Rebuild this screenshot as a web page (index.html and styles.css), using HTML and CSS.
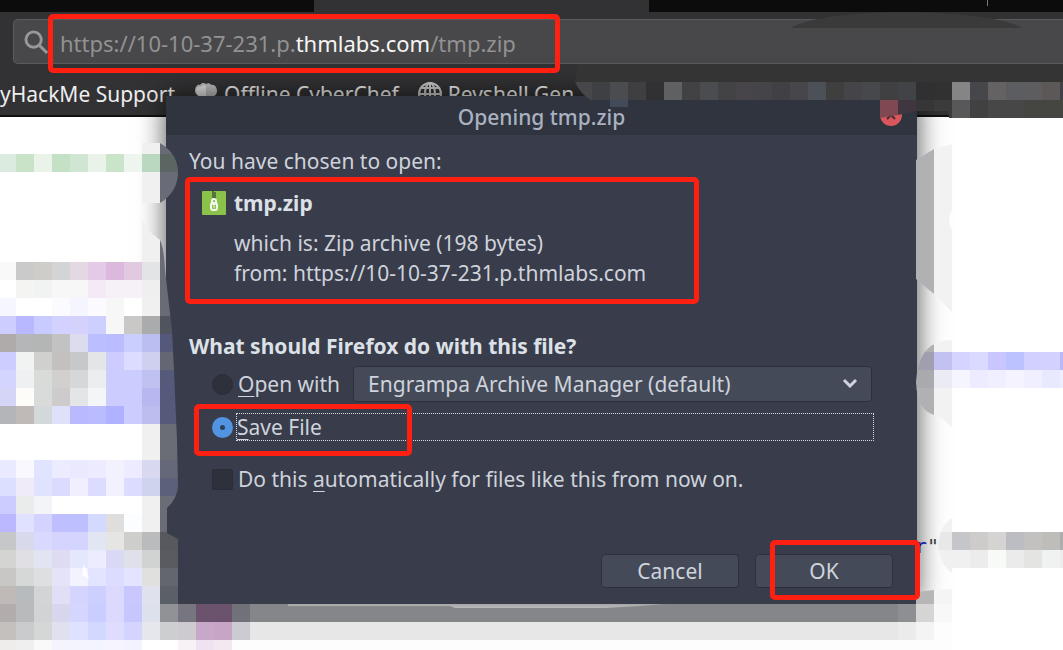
FILE: index.html
```html
<!DOCTYPE html>
<html lang="en">
<head>
<meta charset="utf-8">
<title>Opening tmp.zip</title>
<link rel="stylesheet" href="styles.css">
</head>
<body>
<header class="browser">
  <div class="tabs"><div class="tab-active"></div><i class="tab-divider"></i></div>
  <div class="toolbar">
    <div class="address">
      <svg class="search-icon" viewBox="0 0 26 26" aria-hidden="true"><circle cx="10" cy="10" r="8"/><path d="M16 16l8 8"/></svg>
      <span class="url">https://10-10-37-231.p.<b>thmlabs.com</b>/tmp.zip</span>
      <span class="mark mark-url"></span>
    </div>
  </div>
  <nav class="bookmarks">
    <a href="#">yHackMe Support</a>
    <a href="#"><svg viewBox="0 0 24 24" width="24" height="24" aria-hidden="true"><path fill="#bdbdbd" d="M1 9c0-5 3-7 5-6 2-3 5-2 6-1 3-2 5 0 5 1 4-1 6 3 6 6 0 4-3 5-5 6v6H7v-6c-3-1-6-3-6-6z"/><path fill="#e2e2e2" d="M2 9c0-4 3-5 5-4 1-2 4-2 5-1v11H7c-3-1-5-3-5-6z"/></svg>Offline CyberChef</a>
    <a href="#"><svg viewBox="0 0 24 24" width="24" height="24" fill="none" stroke="#c8c8c8" stroke-width="2" aria-hidden="true"><circle cx="12" cy="12" r="11"/><ellipse cx="12" cy="12" rx="5" ry="11"/><path d="M12 1v22M1 12h22M3 6h18M3 18h18"/></svg>Revshell Gen</a>
  </nav>
</header>
<main class="page"><code class="source"><span>r</span>"</code></main>

<section class="dialog" role="dialog" aria-labelledby="title">
  <div class="titlebar">
    <h1 id="title">Opening tmp.zip</h1>
    <button class="close" type="button" aria-label="Close"><svg viewBox="0 0 22 22" width="22" height="22"><circle cx="11" cy="11" r="11" fill="#d9575c"/><path d="M7 7l8 8M15 7l-8 8" stroke="#3b3038" stroke-width="2"/></svg></button>
  </div>
  <form class="content">
    <p>You have chosen to open:</p>
    <div class="file">
      <div class="file-name">
        <svg viewBox="0 0 24 24" width="24" height="24" aria-hidden="true"><rect width="24" height="24" rx="1" fill="#8bc34a"/><path d="M11 0v2h2v2h-2v2h2v2" fill="none" stroke="#54753a" stroke-width="2"/><rect x="10" y="8" width="4" height="5" rx="2" fill="none" stroke="#f5f8ee" stroke-width="2"/><rect x="9" y="12" width="6" height="7" rx="2" fill="none" stroke="#f5f8ee" stroke-width="2"/><path d="M12 12v5" stroke="#f5f8ee" stroke-width="1"/></svg>
        <strong>tmp.zip</strong>
      </div>
      <div class="file-info"><div>which is: Zip archive (198 bytes)</div><div>from: https://10-10-37-231.p.thmlabs.com</div></div>
      <span class="mark mark-file"></span>
    </div>
    <h2>What should Firefox do with this file?</h2>
    <div class="option open-option">
      <input type="radio" name="action" id="open"><label for="open"><u>O</u>pen with</label>
      <div class="select-wrap">
        <select aria-label="Application"><option>Engrampa Archive Manager (default)</option></select>
        <svg class="chevron" viewBox="0 0 16 10" aria-hidden="true"><path d="M2 2l6 6 6-6"/></svg>
      </div>
    </div>
    <div class="option save-option">
      <input type="radio" name="action" id="save" checked><label for="save"><u>S</u>ave File</label>
      <span class="mark mark-save"></span>
    </div>
    <div class="option auto-option">
      <input type="checkbox" id="auto"><label for="auto">Do this <u>a</u>utomatically for files like this from now on.</label>
    </div>
    <div class="actions">
      <button type="button">Cancel</button>
      <div class="ok"><button type="button">OK</button><span class="mark mark-ok"></span></div>
    </div>
  </form>
</section>

<svg class="mosaic" viewBox="0 0 1063 650" aria-hidden="true">
  <defs>
    <clipPath id="edges"><path d="M0 154H142V143H160Q178 154 178 172Q178 192 160 203H142V172H0zM0 262H142V220L150 232L160 240Q164 248 165 270L172 330L174 370L177 440L178 485Q178 498 167 508V533L178 539V604H288V606H450L455 608H605L640 606L665 604H916V592L934 590L952 589V650H0zM577 64H1063V118H949L948 111H916L898 115L880 118V100H628V107H613Q585 104 575 82zM916 160L934 149L952 144V210Q946 220 952 230V312L934 294L916 279zM952 340Q918 340 916 382Q917 410 934 415Q944 418 952 428V388H1063V352H952zM952 518Q940 524 938 546Q940 565 952 573V568H1063V532H952z"/></clipPath>
  </defs>
  <path fill="#3a3a3b" d="M791 28C825 6 990 8 1022 28z"/>
  <g id="cells" clip-path="url(#edges)"></g>
  <path fill="#fff" d="M84 564l5 15-7-4z"/>
</svg>
<script src="mosaic.js"></script>
</body>
</html>
```
FILE: styles.css
```css
* { box-sizing: border-box; }
body { margin: 0; min-height: 100vh; position: relative; overflow: hidden; background: #fff; font: 21px/30px "Noto Sans", sans-serif; color: #ced3dc; }
h1, h2, p { margin: 0; font-size: inherit; }
.browser { background: #323234; border-bottom: 2px solid #111; height: 117px; }
.tabs { height: 12px; background: #0c0c0c; display: flex; }
.tab-active { margin-left: 314px; width: 335px; background: #323234; }
.tab-divider { margin-left: 338px; width: 1px; height: 6px; background: #777; }
.toolbar { padding: 7px 0 0 13px; }
.address { position: relative; height: 45px; display: flex; align-items: center; gap: 11px; padding: 2px 0 0 10px; background: #48484a; border: 1px solid #5b5b5d; border-width: 1px 0 1px 1px; border-radius: 5px 0 0 5px; }
.search-icon { width: 25px; height: 25px; fill: none; stroke: #98989a; stroke-width: 3; }
.url { color: #929292; font-size: 22px; white-space: nowrap; }
.url b { color: #f5f5f5; font-weight: 400; }
.bookmarks { display: flex; gap: 19px; padding-top: 15px; white-space: nowrap; }
.bookmarks a { display: flex; align-items: center; gap: 6px; color: #eee; text-decoration: none; }
.page { padding: 413px 124px 0 0; text-align: right; }
.source { font: 20px/30px "DejaVu Sans Mono", monospace; color: #444; }
.source span { color: #22c; }
.dialog { position: absolute; top: 96px; left: 166px; right: 146px; background: #393c4a; box-shadow: 0 0 26px rgba(0, 0, 0, .7); }
.titlebar { position: relative; height: 39px; background: #2f343f; text-align: center; }
.titlebar h1 { font-weight: 500; line-height: 42px; color: #aab2c1; }
.close { position: absolute; top: 8px; right: 15px; padding: 0; border: 0; background: none; line-height: 0; }
.content { padding: 11px 24px 16px 23px; }
.file { position: relative; padding: 12px 0 0 13px; }
.file-name { display: flex; align-items: center; gap: 8px; color: #dce1e8; }
.file-info { padding: 10px 0 0 32px; }
h2 { margin-top: 43px; font-weight: 700; color: #dce1e8; }
.option { position: relative; display: flex; align-items: center; margin-left: 23px; gap: 5px; white-space: nowrap; }
.option u { text-underline-offset: 4px; text-decoration-thickness: 1px; }
.option input { appearance: none; flex: none; width: 21px; height: 21px; margin: 0; background: #2e313c; border: 1px solid #2a2d38; border-radius: 2px; }
.option input[type="radio"] { border-radius: 50%; }
.option input:checked { border: 8px solid #5294e2; background: #2b3f5c; }
.open-option { height: 36px; margin-top: 5px; margin-right: 21px; }
.select-wrap { position: relative; flex: 1; margin-left: 8px; }
select { appearance: none; display: block; width: 100%; height: 36px; padding: 0 40px 0 14px; font: inherit; color: inherit; background: #444a58; border: 1px solid #2d303c; border-radius: 4px; }
.chevron { position: absolute; right: 14px; top: 12px; width: 16px; height: 10px; fill: none; stroke: #ced3dc; stroke-width: 3; }
.save-option { height: 28px; margin-top: 11px; margin-right: 19px; gap: 3px; }
.save-option label { flex: 1; height: 28px; line-height: 26px; border: 1px dotted #d7dae0; }
.auto-option { margin-top: 23px; }
.actions { display: flex; justify-content: flex-end; gap: 16px; margin-top: 60px; }
.actions button { width: 138px; height: 34px; padding: 0; font: inherit; color: inherit; background: #444a58; border: 1px solid #2d303c; border-radius: 4px; }
.ok { position: relative; height: 34px; }
.mark { position: absolute; border: 5px solid #ff2012; border-radius: 5px; pointer-events: none; z-index: 3; }
.mark-url { left: 34px; top: -6px; width: 512px; height: 59px; }
.mark-file { left: -4px; top: 1px; width: 514px; height: 127px; }
.mark-save { left: -18px; top: -9px; width: 218px; height: 52px; }
.mark-ok { left: 15px; top: -14px; width: 150px; height: 60px; }
.mosaic { position: absolute; left: 0; top: 0; width: 1063px; height: 650px; pointer-events: none; }
```
FILE: mosaic.js
```js
// Each row: top, left, then one colour per 18px cell.
const rows = [
  "64 574 " + "343434 ".repeat(28),
  "82 574 47474b 3f4043 4b4c4f 3f3f42 313133 5f6064 424245 4b4c4f 434346 474549 454549 414145 47474b 4b5156 3f3f40 454549 47484c 404042 414347 303032 313132 858586 45474a 656263 5c5d60 5d5d60 5c5858 404146",
  "100 574 2f343f 2f343f 434b5a",
  "100 880 804850 40363f 363638 3b3b3c 58585a 414142 474747 474747 454542 454542 454542",
  "136 142 f0f0f0 696c76",
  "154 -2 dcebe0 c9e3c9 e9f3e9 c4e0c5 d0e6d2 e9f3e9 c9e4c9 eef5ee bad7c0 5b6562",
  "172 142 f0f0f0 696c76",
  "190 142 f0f0f0 696c76",
  "208 142 f0f0f0 696c76",
  "226 142 f0f0f0 696c76",
  "244 142 f0f0f0 696c76",
  "262 -2 f9f9f9 c9cac9 cfcdca d2d5d4 e4d8e2 e3cbe7 dcb9dc e1cae0 e2e4e6 696c76",
  "280 -2 ffffff f4f5f3 f0f3f2 f7f7f7 f6f7f6 f4e9f4 f6f1f7 f5f1f7 efefef 696c76",
  "298 -2 f5f6ff ffffff ffffff fafaff f5f5ff fafaff f7f7f7 ffffff f0f0f0 696c76",
  "316 -2 cdcdff b7b8ff c8cbff d2d1ff d5d1fd cdd0ff f7f7f7 c9c8c7 a9abad 50545e",
  "334 -2 afabaa b4b6b7 b4b6b6 c2c2c2 dddcef bcbfff babcff cccdff bbbef1 54587a",
  "352 -2 cdcdff f1f2f2 d0d1ce c5c0c0 c6c8ca e4e5e6 ccccff dbdcff cfd0ef 646772",
  "370 -2 d4d5ff eef0f2 d9dbd9 d2d0ce d5d7d9 ecedef ccccff cccdff bfc1f1 55597a",
  "388 -2 d5d6f7 fefcf8 d9dbda cecbcc e3e5e7 f3f5f8 ccccff cccdff b7b8f0 55597a",
  "406 -2 b3b5b8 bfbab7 d3d8db dfe1fa b9b9ff bbbcff b1b2ff cccdff bdbef0 55597a",
  "424 -2 " + "ffffff ".repeat(8) + "f0f0f0 6a6d76",
  "442 -2 " + "ffffff ".repeat(8) + "f0f0f0 6a6d76",
  "460 -2 e9e9ff f9f8ff e1e4ff ecebff e9e9ff edebff f2f2ff ecebff d8d9f0 656879",
  "478 -2 dcdfff f0ebf8 e0e3ff dbdaff f0eeff dbdcff f2f2ff dbdcff d0d3ee 5c6078",
  "496 -2 cbccff eaebeb f2f4f7 ffffff ffffff ffffff ffffff ffffff f0f0f0 6a6d76",
  "514 -2 bbb8ff e0e1ff d4d2ff bfbeff bdbfff d4daff dfdedd fbfdff f0f0f0 6a6d76",
  "532 -2 c5c7c9 d8d9eb d9d8ff d4d4ff d3d4ff e2e5f2 e5e5e3 cecfcd b9bbbd 58595e",
  "550 -2 d4d5d2 e0dfe3 e1e4f2 dfdbf2 e5e7ff edecff d9d9f6 e0e0eb d0d3d1 5a5b60",
  "568 -2 c8c7c5 d5d8d7 dddfe0 e4e3f7 f3f2ff e3e4ff dbdcff e3e4ff e0e0df 63666e",
  "586 -2 bfbab7 b8bbbd d2d4d5 e1dff5 d5d4ff cdcfff ddd9fe c8c8ff dfe2ec 5b5f68",
  "604 -2 b2adac b8babc d1d3d4 d8d6ed d5d6ff cacdff dcd9fe c6c7ff dde1ec 909295 77757f 6c536d 6c536d 707179 " + "858689 ".repeat(36) + "8e8f93 d5d5d5 f8f8f8",
  "622 -2 c4c0bd c9cbcd d5d7d7 e0e0f0 dee2ff d3d8ff dfdcff d3d4ff e5e7ec cdcecf cfc9d0 c7a8cb c7a5c7 cccbd1 " + "e7e7e7 ".repeat(36) + "ebebeb f4f4f4 fdfdfd",
  "640 -2 eeedec eeefee f9f9fa f5f4fd f4f4ff f2f4ff f5f4ff f3f3ff ffffff ffffff f6f2f5 f0e3f1 f3e8f1 fdfdfd " + "fdfdfd ".repeat(39),
  "586 916 b6b6b6 f4f4f4",
  "136 916 b0b1b3 f2f2f2",
  "154 916 b0b1b3 f2f2f2",
  "172 916 b0b1b3 f2f2f2",
  "190 916 b0b1b3 f2f2f2",
  "208 916 b0b1b3 f2f2f2",
  "226 916 b0b1b3 f2f2f2",
  "244 916 b0b1b3 f2f2f2",
  "262 916 b0b1b3 f2f2f2",
  "280 916 b0b1b3 f2f2f2",
  "298 916 b0b1b3 f2f2f2",
  "334 916 b0b1b3 f2f2f2",
  "352 916 a09fb0 c3c1f2 d3d4ff dad9ff c9c5ff bcc2ff d1d0ff d3d2ff b9b8ff",
  "370 916 a9a9ae ebebf3 f5f5ff ecebff f0efff f4f3ff f0efff e8e8ff edeeff",
  "388 916 b0b1b3 f2f2f2",
  "406 916 b0b1b3 f2f2f2",
  "424 916 b0b1b3 f2f2f2",
  "514 934 f2f2f2",
  "532 934 e8e8e8 c5c6c9 cdcccb d6d4d2 bcbdc2 c3c1bf bfbdba adadae",
  "550 934 f0f0f0 f0f0f0 ececec f8faf8 ebebeb e4e4e2 eff2f0 ededed",
  "568 934 f2f2f2"
];

const cells = document.getElementById("cells");
for (const row of rows) {
  const [top, left, ...colours] = row.trim().split(/\s+/);
  colours.forEach((colour, i) => {
    const cell = document.createElementNS("http://www.w3.org/2000/svg", "rect");
    cell.setAttribute("x", Number(left) + i * 18);
    cell.setAttribute("y", top);
    cell.setAttribute("width", 18);
    cell.setAttribute("height", 18);
    cell.setAttribute("fill", "#" + colour);
    cell.setAttribute("shape-rendering", "crispEdges");
    cells.append(cell);
  });
}
```
